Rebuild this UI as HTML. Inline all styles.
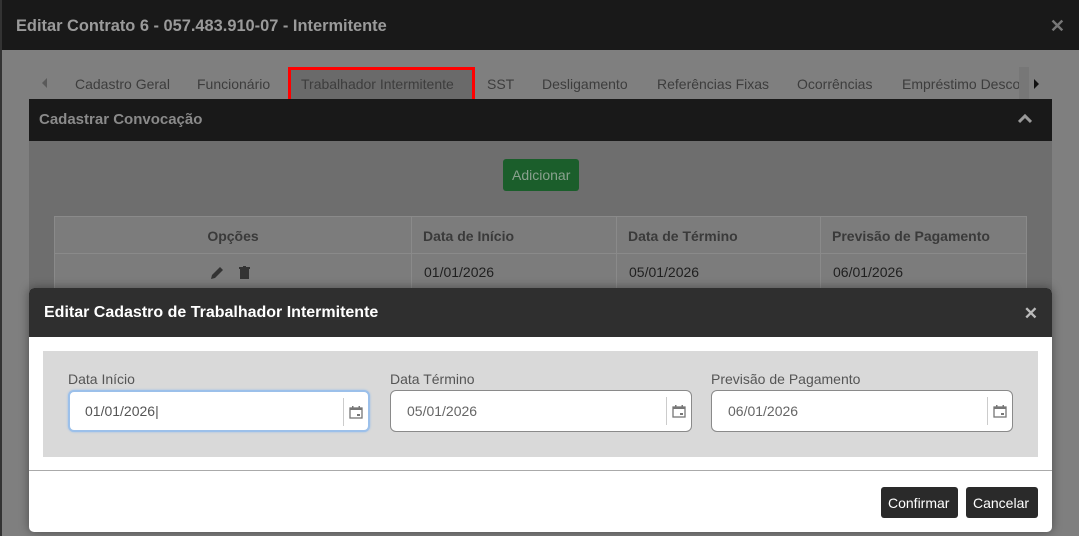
<!DOCTYPE html>
<html><head><meta charset="utf-8"><style>
*{box-sizing:border-box;margin:0;padding:0}
body{width:1079px;height:536px;overflow:hidden;background:#7f7f7f;font-family:"Liberation Sans",sans-serif;position:relative}
.abs{position:absolute}
.hdr{left:2px;top:0;width:1077px;height:50px;background:#191919;color:#9a9a9a;font-weight:bold;font-size:16.4px;padding:17px 0 0 14px}
.hdr .x{position:absolute;right:14px;top:16px;font-size:18px;color:#777}
.leftb{left:0;top:0;width:2px;height:536px;background:#333}
.tab{top:76px;font-size:14px;color:#3d3d3d}
.sec{left:29px;top:99px;width:1023px;height:42px;background:#191919;color:#8a8a8a;font-weight:bold;font-size:15px;padding:12px 10px}
.cont{left:29px;top:141px;width:1023px;height:150px;background:#6e6e6e}
.th{top:216px;height:38px;background:#7c7c7c;border:1px solid #8a8a8a;font-size:14px;color:#3a3a3a;font-weight:bold;padding:11px 11px}
.td{top:253px;height:40px;background:#7c7c7c;border:1px solid #8a8a8a;font-size:14px;color:#1f1f1f;padding:10px 12px}
.modal{left:29px;top:288px;width:1023px;height:244px;background:#fff;border-radius:5px;overflow:hidden;box-shadow:0 0 10px rgba(0,0,0,.4)}
.mh{height:49px;background:#2f2f2f;color:#fff;font-weight:bold;font-size:16px;padding:16px 15px}
.mh .x{position:absolute;right:14px;top:16px;font-size:17px;color:#bbb}
.panel{position:absolute;left:14px;top:63px;width:995px;height:106px;background:#d9d9d9}
.lbl{position:absolute;top:20px;font-size:14px;color:#555}
.inp{position:absolute;top:39px;width:302px;height:42px;background:#fff;border:1px solid #8a8a8a;border-radius:6px;font-size:14px;color:#666;padding:12px 16px}
.inp .sep{position:absolute;right:24px;top:6px;width:1px;height:28px;background:#ccc}
.inp svg{position:absolute;right:5px;top:13px}
.line{position:absolute;left:0;top:182px;width:1023px;height:1px;background:#aaa}
.btn{position:absolute;top:199px;height:31px;background:#2a2a2a;color:#fff;font-size:14px;border-radius:3px;padding:8px 7px}
</style></head><body>
<div class="abs leftb"></div>
<div class="abs hdr">Editar Contrato 6 - 057.483.910-07 - Intermitente<span class="x">✕</span></div>
<div class="abs" style="left:42px;top:78px;width:0;height:0;border-top:5px solid transparent;border-bottom:5px solid transparent;border-right:5px solid #5a5a5a"></div>
<div class="abs tab" style="left:75px">Cadastro Geral</div>
<div class="abs tab" style="left:197px">Funcionário</div>
<div class="abs" style="left:288px;top:67px;width:187px;height:35px;border:3px solid #f00;background:#6a6a6a"></div>
<div class="abs tab" style="left:301px">Trabalhador Intermitente</div>
<div class="abs tab" style="left:487px">SST</div>
<div class="abs tab" style="left:542px">Desligamento</div>
<div class="abs tab" style="left:657px">Referências Fixas</div>
<div class="abs tab" style="left:797px">Ocorrências</div>
<div class="abs tab" style="left:902px">Empréstimo Desco</div>
<div class="abs" style="left:1019px;top:67px;width:10px;height:32px;background:#777"></div>
<div class="abs" style="left:1034px;top:79px;width:0;height:0;border-top:5px solid transparent;border-bottom:5px solid transparent;border-left:5px solid #111"></div>
<div class="abs sec">Cadastrar Convocação<svg class="abs" style="right:20px;top:15px" width="14" height="10" viewBox="0 0 14 10"><path d="M1 8 L7 2 L13 8" stroke="#999" stroke-width="3" fill="none"/></svg></div>
<div class="abs cont"></div>
<div class="abs" style="left:503px;top:159px;width:76px;height:32px;background:#1b5e2b;border-radius:3px;color:#8aa18e;font-size:14px;padding:8px 9px">Adicionar</div>
<div class="abs th" style="left:54px;width:358px;text-align:center">Opções</div>
<div class="abs th" style="left:411px;width:206px">Data de Início</div>
<div class="abs th" style="left:616px;width:205px">Data de Término</div>
<div class="abs th" style="left:820px;width:207px">Previsão de Pagamento</div>
<div class="abs td" style="left:54px;width:358px"><svg class="abs" style="left:155px;top:12px" width="14" height="14" viewBox="0 0 14 14"><path d="M1 13 L2 9 L10 1 L13 4 L5 12 Z" fill="#333"/></svg><svg class="abs" style="left:184px;top:12px" width="11" height="13" viewBox="0 0 11 13"><rect x="0" y="1" width="11" height="2" fill="#333"/><rect x="4" y="0" width="3" height="2" fill="#333"/><rect x="1" y="3" width="9" height="10" fill="#333"/></svg></div>
<div class="abs td" style="left:411px;width:206px">01/01/2026</div>
<div class="abs td" style="left:616px;width:205px">05/01/2026</div>
<div class="abs td" style="left:820px;width:207px">06/01/2026</div>
<div class="abs modal">
<div class="mh">Editar Cadastro de Trabalhador Intermitente<span class="x">✕</span></div>
<div class="panel">
<div class="lbl" style="left:25px">Data Início</div>
<div class="inp" style="left:25px;border:2px solid #9cc0ea;box-shadow:0 0 2px #9cc0ea;padding:11px 15px;color:#555">01/01/2026|<span class="sep"></span><svg width="14" height="14" viewBox="0 0 14 14"><rect x="1" y="3" width="12" height="10" fill="none" stroke="#777" stroke-width="1.3"/><rect x="1" y="3" width="12" height="2" fill="#777"/><rect x="3" y="1" width="1.5" height="3" fill="#777"/><rect x="9.5" y="1" width="1.5" height="3" fill="#777"/><rect x="8" y="9" width="3" height="2" fill="#777"/></svg></div>
<div class="lbl" style="left:347px">Data Término</div>
<div class="inp" style="left:347px">05/01/2026<span class="sep"></span><svg width="14" height="14" viewBox="0 0 14 14"><rect x="1" y="3" width="12" height="10" fill="none" stroke="#777" stroke-width="1.3"/><rect x="1" y="3" width="12" height="2" fill="#777"/><rect x="3" y="1" width="1.5" height="3" fill="#777"/><rect x="9.5" y="1" width="1.5" height="3" fill="#777"/><rect x="8" y="9" width="3" height="2" fill="#777"/></svg></div>
<div class="lbl" style="left:668px">Previsão de Pagamento</div>
<div class="inp" style="left:668px">06/01/2026<span class="sep"></span><svg width="14" height="14" viewBox="0 0 14 14"><rect x="1" y="3" width="12" height="10" fill="none" stroke="#777" stroke-width="1.3"/><rect x="1" y="3" width="12" height="2" fill="#777"/><rect x="3" y="1" width="1.5" height="3" fill="#777"/><rect x="9.5" y="1" width="1.5" height="3" fill="#777"/><rect x="8" y="9" width="3" height="2" fill="#777"/></svg></div>
</div>
<div class="line"></div>
<div class="btn" style="left:852px;width:77px">Confirmar</div>
<div class="btn" style="left:937px;width:72px">Cancelar</div>
</div>
</body></html>
